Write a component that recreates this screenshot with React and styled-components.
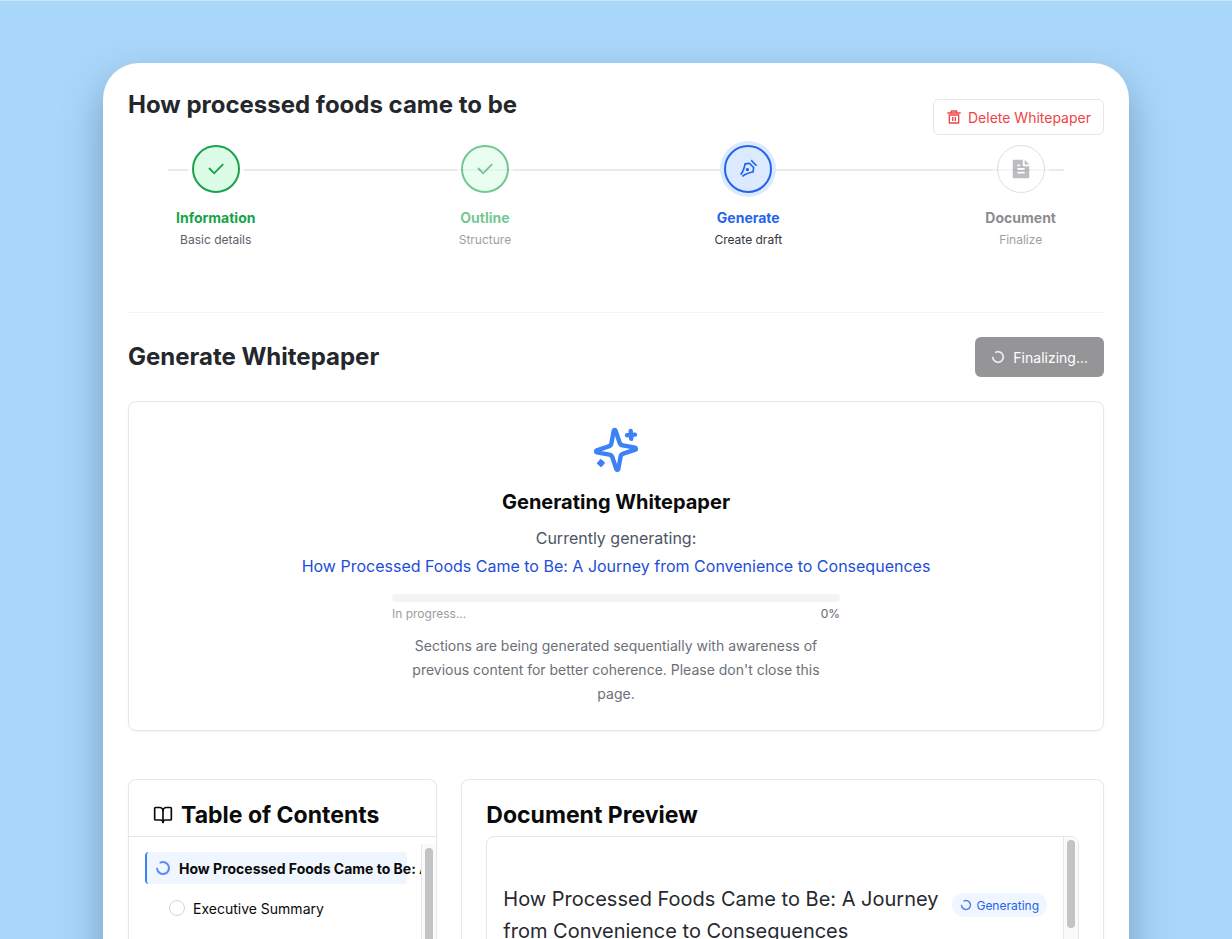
import React from "react";
import styled, { createGlobalStyle, css } from "styled-components";
import { BookOpen, LoaderCircle } from "lucide-react";
import {
  RiCheckLine,
  RiDeleteBin5Line,
  RiFileTextFill,
  RiPenNibLine,
} from "react-icons/ri";

const GlobalStyle = createGlobalStyle`
  * {
    box-sizing: border-box;
    margin: 0;
    padding: 0;
  }

  body {
    font-family: Inter, sans-serif;
    color: #0a0a0a;
    background: #a9d7f9;
  }
`;

const Page = styled.div`
  display: flex;
  height: 100vh;
  padding: 62px 103px 0;
  border-top: 1px solid #c9e5fb;
  background: #a9d7f9;
  overflow: hidden;
`;

const Sheet = styled.main`
  flex: 1;
  min-width: 0;
  min-height: 1100px;
  padding: 25px;
  border-radius: 36px;
  background: #fff;
  box-shadow: 0 18px 40px rgba(10, 45, 85, 0.34);
`;

const Header = styled.header`
  display: flex;
  justify-content: space-between;
  align-items: flex-start;
  height: 47px;
`;

const Heading = styled.h1`
  font-size: 24px;
  line-height: 34px;
  font-weight: 700;
  color: #24272c;
`;

const DeleteButton = styled.button`
  display: flex;
  align-items: center;
  align-self: flex-end;
  gap: 6px;
  height: 36px;
  padding: 0 12px;
  border: 1px solid #e5e7eb;
  border-radius: 6px;
  background: #fff;
  color: #ef4444;
  font-family: inherit;
  font-size: 14px;
`;

const Stepper = styled.nav`
  position: relative;
  margin: 10px 40px 0;
  padding-bottom: 64px;

  &::before {
    content: "";
    position: absolute;
    top: 24px;
    left: 0;
    right: 0;
    height: 2px;
    background: #e9eaec;
  }
`;

const StepList = styled.ol`
  position: relative;
  display: flex;
  justify-content: space-between;
  list-style: none;
`;

const Step = styled.li`
  display: flex;
  flex-direction: column;
  align-items: center;
  padding: 0 8px;
  opacity: ${({ $dim }) => ($dim ? 0.6 : 1)};
`;

const stepColors = {
  done: css`
    border: 2px solid #16a34a;
    background: #dcfce7;
    color: #16a34a;
    box-shadow: 0 0 0 4px #fff;
  `,
  active: css`
    border: 2px solid #2563eb;
    background: #dbeafe;
    color: #2563eb;
    box-shadow: 0 0 0 4px #dbeafe;
  `,
  todo: css`
    border: 1px solid #c9cbce;
    background: #fff;
    color: #8f9298;
    box-shadow: 0 0 0 4px #fff;
  `,
};

const StepCircle = styled.span`
  display: flex;
  align-items: center;
  justify-content: center;
  width: 48px;
  height: 48px;
  border-radius: 50%;
  ${({ $state }) => stepColors[$state]}
`;

const StepLabel = styled.span`
  margin-top: 15px;
  font-size: 14px;
  line-height: 20px;
  font-weight: 700;
  color: ${({ $color }) => $color};
`;

const StepHint = styled.span`
  margin-top: 4px;
  font-size: 12px;
  line-height: 16px;
  color: ${({ $color }) => $color};
`;

const SectionBar = styled.div`
  display: flex;
  justify-content: space-between;
  align-items: center;
  padding-top: 24px;
  border-top: 1px solid #f3f4f6;
`;

const FinalizeButton = styled.button`
  display: flex;
  align-items: center;
  gap: 8px;
  height: 40px;
  padding: 0 16px;
  border: 0;
  border-radius: 6px;
  background: #959597;
  color: #fff;
  font-family: inherit;
  font-size: 14px;
`;

const Spinner = styled(LoaderCircle)`
  flex-shrink: 0;
  transform: rotate(-115deg);
  opacity: 0.8;
`;

const Card = styled.section`
  min-width: 0;
  border: 1px solid #e5e7eb;
  border-radius: 8px;
  background: #fff;
  box-shadow: 0 1px 2px rgba(0, 0, 0, 0.05);
`;

const ProgressCard = styled(Card)`
  display: flex;
  flex-direction: column;
  align-items: center;
  margin-top: 24px;
  padding: 24px;
  text-align: center;
`;

const SparkleIcon = styled.svg`
  width: 48px;
  height: 48px;
  color: #3b82f6;
  transform: rotate(-4deg);
`;

const ProgressTitle = styled.h3`
  margin-top: 14px;
  font-size: 20px;
  line-height: 28px;
  font-weight: 700;
`;

const ProgressText = styled.p`
  margin-top: 8px;
  font-size: 16px;
  line-height: 28px;
  color: #4b5563;
`;

const CurrentSection = styled.p`
  font-size: 16px;
  line-height: 28px;
  color: #1d4ed8;
`;

const ProgressBar = styled.div`
  width: 100%;
  max-width: 448px;
  height: 8px;
  margin-top: 14px;
  border-radius: 4px;
  background: #f3f4f6;
`;

const ProgressMeta = styled.div`
  display: flex;
  justify-content: space-between;
  width: 100%;
  max-width: 448px;
  margin-top: 4px;
  font-size: 12px;
  line-height: 16px;
  color: #9a9da3;
`;

const Percent = styled.span`
  color: #63676e;
`;

const Note = styled.p`
  max-width: 448px;
  margin-top: 12px;
  padding: 0 16px;
  font-size: 14px;
  line-height: 24px;
  color: #6b7078;
`;

const Columns = styled.div`
  display: grid;
  grid-template-columns: repeat(3, minmax(0, 1fr));
  gap: 24px;
  margin-top: 48px;
`;

const Preview = styled(Card)`
  grid-column: span 2;
  padding: 0 24px 24px;
`;

const PanelTitle = styled.h2`
  display: flex;
  align-items: center;
  gap: 8px;
  height: 56px;
  padding-top: 14px;
  font-size: 23px;
  line-height: 32px;
  font-weight: 700;
`;

const ContentsTitle = styled(PanelTitle)`
  height: 57px;
  padding-left: 24px;
  border-bottom: 1px solid #e5e7eb;
`;

const ContentsBody = styled.div`
  display: flex;
  height: 320px;
  padding-top: 7px;
`;

const ContentsList = styled.ul`
  flex: 1;
  min-width: 0;
  padding: 8px 14px 0 16px;
  overflow: hidden;
  list-style: none;
`;

const ContentsItem = styled.li`
  display: flex;
  align-items: center;
  gap: 8px;
  height: 32px;
  margin-bottom: 8px;
  padding-left: ${({ $active }) => ($active ? "8px" : "24px")};
  border-left: ${({ $active }) => ($active ? "2px solid #3b82f6" : "0")};
  border-radius: 4px;
  background: ${({ $active }) => ($active ? "#eff6ff" : "none")};
  font-size: 14px;
  font-weight: ${({ $active }) => ($active ? 700 : 400)};
  white-space: nowrap;

  svg {
    color: #3b6ff6;
  }
`;

const EmptyCircle = styled.span`
  width: 16px;
  height: 16px;
  border: 1px solid #d1d5db;
  border-radius: 50%;
`;

const ScrollTrack = styled.div`
  width: 15px;
  padding: ${({ $top }) => $top} 3px 0;
  border-left: 1px solid #e8e8e8;
  background: #fafafa;
`;

const ScrollThumb = styled.div`
  height: ${({ $height }) => $height};
  border-radius: 4px;
  background: #c1c3c5;
`;

const Document = styled.div`
  display: flex;
  height: 320px;
  border: 1px solid #e5e7eb;
  border-radius: 8px;
  overflow: hidden;
`;

const DocumentHead = styled.div`
  display: flex;
  flex: 1;
  align-items: flex-start;
  gap: 12px;
  min-width: 0;
  padding: 46px 16px 0;
`;

const DocumentTitle = styled.h3`
  flex: 1;
  font-size: 20px;
  line-height: 32px;
  font-weight: 400;
  color: #27292e;
`;

const Badge = styled.span`
  display: flex;
  align-items: center;
  gap: 4px;
  height: 24px;
  margin-top: 10px;
  padding: 0 8px;
  border-radius: 12px;
  background: #eff6ff;
  color: #2563eb;
  font-size: 12px;
`;

const steps = [
  {
    label: "Information",
    hint: "Basic details",
    state: "done",
    icon: RiCheckLine,
    color: "#16a34a",
    hintColor: "#5b616b",
  },
  {
    label: "Outline",
    hint: "Structure",
    state: "done",
    dim: true,
    icon: RiCheckLine,
    color: "#16a34a",
    hintColor: "#5b616b",
  },
  {
    label: "Generate",
    hint: "Create draft",
    state: "active",
    icon: RiPenNibLine,
    iconSize: 20,
    color: "#2563eb",
    hintColor: "#33363c",
  },
  {
    label: "Document",
    hint: "Finalize",
    state: "todo",
    dim: true,
    icon: RiFileTextFill,
    color: "#3d4046",
    hintColor: "#5b616b",
  },
];

function Sparkles() {
  return (
    <SparkleIcon
      viewBox="0 0 24 24"
      fill="none"
      stroke="currentColor"
      strokeWidth="2.2"
      strokeLinecap="round"
      strokeLinejoin="round"
      aria-hidden="true"
    >
      <path d="M9.937 15.5A2 2 0 0 0 8.5 14.063l-6.135-1.582a.5.5 0 0 1 0-.962L8.5 9.936A2 2 0 0 0 9.937 8.5l1.582-6.135a.5.5 0 0 1 .963 0L14.063 8.5A2 2 0 0 0 15.5 9.937l6.135 1.581a.5.5 0 0 1 0 .964L15.5 14.063a2 2 0 0 0-1.437 1.437l-1.582 6.135a.5.5 0 0 1-.963 0z" />
      <path d="M20 3v4" />
      <path d="M22 5h-4" />
      <path
        d="M4 16.5 5.5 18 4 19.5 2.5 18z"
        fill="currentColor"
        strokeWidth="1"
      />
    </SparkleIcon>
  );
}

function App() {
  return (
    <Page>
      <GlobalStyle />
      <Sheet>
        <Header>
          <Heading>How processed foods came to be</Heading>
          <DeleteButton type="button">
            <RiDeleteBin5Line size={16} />
            Delete Whitepaper
          </DeleteButton>
        </Header>

        <Stepper>
          <StepList>
            {steps.map(({ icon: Icon, iconSize = 22, ...step }) => (
              <Step key={step.label} $dim={step.dim}>
                <StepCircle $state={step.state}>
                  <Icon size={iconSize} />
                </StepCircle>
                <StepLabel $color={step.color}>{step.label}</StepLabel>
                <StepHint $color={step.hintColor}>{step.hint}</StepHint>
              </Step>
            ))}
          </StepList>
        </Stepper>

        <SectionBar>
          <Heading as="h2">Generate Whitepaper</Heading>
          <FinalizeButton type="button">
            <Spinner size={14} strokeWidth={3} />
            Finalizing...
          </FinalizeButton>
        </SectionBar>

        <ProgressCard>
          <Sparkles />
          <ProgressTitle>Generating Whitepaper</ProgressTitle>
          <ProgressText>Currently generating:</ProgressText>
          <CurrentSection>
            How Processed Foods Came to Be: A Journey from Convenience to
            Consequences
          </CurrentSection>
          <ProgressBar
            role="progressbar"
            aria-label="Generating Whitepaper"
            aria-valuenow={0}
          />
          <ProgressMeta>
            <span>In progress...</span>
            <Percent>0%</Percent>
          </ProgressMeta>
          <Note>
            Sections are being generated sequentially with awareness of previous
            content for better coherence. Please don't close this page.
          </Note>
        </ProgressCard>

        <Columns>
          <Card>
            <ContentsTitle>
              <BookOpen size={20} />
              Table of Contents
            </ContentsTitle>
            <ContentsBody>
              <ContentsList>
                <ContentsItem $active>
                  <Spinner size={16} strokeWidth={3} />
                  How Processed Foods Came to Be: A Journey
                </ContentsItem>
                <ContentsItem>
                  <EmptyCircle />
                  Executive Summary
                </ContentsItem>
              </ContentsList>
              <ScrollTrack $top="4px">
                <ScrollThumb $height="240px" />
              </ScrollTrack>
            </ContentsBody>
          </Card>

          <Preview>
            <PanelTitle>Document Preview</PanelTitle>
            <Document>
              <DocumentHead>
                <DocumentTitle>
                  How Processed Foods Came to Be: A Journey from Convenience to
                  Consequences
                </DocumentTitle>
                <Badge>
                  <Spinner size={12} strokeWidth={3} />
                  Generating
                </Badge>
              </DocumentHead>
              <ScrollTrack $top="3px">
                <ScrollThumb $height="88px" />
              </ScrollTrack>
            </Document>
          </Preview>
        </Columns>
      </Sheet>
    </Page>
  );
}

export default App;
